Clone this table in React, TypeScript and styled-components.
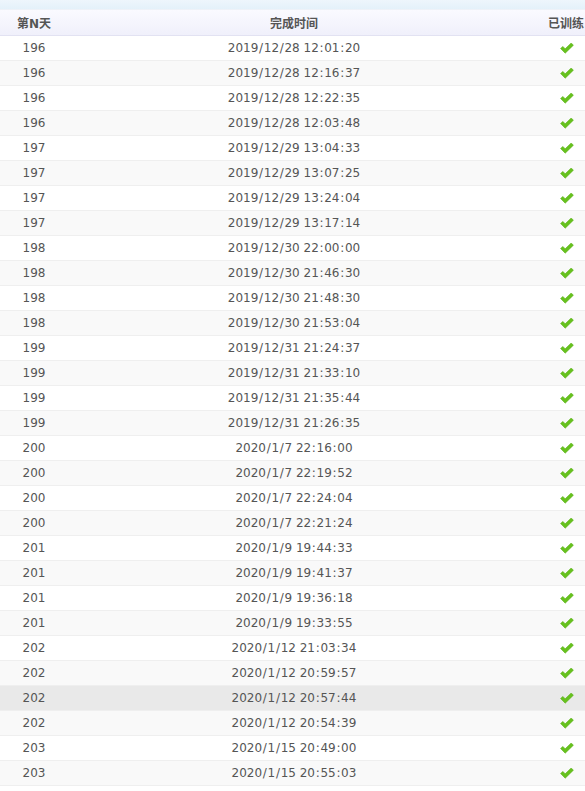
import React, { FC } from "react";
import styled, { createGlobalStyle } from "styled-components";

const GlobalStyle = createGlobalStyle`
  html, body {
    margin: 0;
    padding: 0;
    background: #ffffff;
    overflow: hidden;
  }
`;

const Page = styled.div`
  width: 585px;
  overflow: hidden;
  font-family: "DejaVu Sans", Verdana, "Noto Sans CJK SC", sans-serif;
  font-size: 12px;
  color: #555555;
`;

const TopBand = styled.div`
  height: 10px;
  background: linear-gradient(#eef6fc, #e4f1fa);
  border-bottom: 1px solid #eef2f8;
  box-sizing: border-box;
`;

const Table = styled.table`
  width: 612px;
  border-collapse: collapse;
  table-layout: fixed;
`;

const HeadCell = styled.th<{ width: number }>`
  width: ${(p) => p.width}px;
  height: 25px;
  padding: 0;
  font-weight: bold;
  font-family: "DejaVu Sans", "Noto Sans CJK SC", sans-serif;
  color: #555555;
  text-align: center;
  background: linear-gradient(#fafaff, #f0f0fb);
  border-bottom: 1px solid #e2e2f2;
`;

const Row = styled.tr<{ $alt: boolean; $hover?: boolean }>`
  height: 25px;
  background: ${(p) => (p.$hover ? "#e9e9e9" : p.$alt ? "#f9f9f9" : "#ffffff")};
  border-bottom: 1px solid #efefef;
`;

const Cell = styled.td`
  padding: 0;
  text-align: center;
  vertical-align: middle;
`;

// Verdana-like wider separators
const Sep = styled.span`
  padding: 0 0.7px;
`;

const Stamp: FC<{ text: string }> = ({ text }) => (
  <>
    {text.split(/([/:])/).map((part, i) => (part === "/" || part === ":" ? <Sep key={i}>{part}</Sep> : part))}
  </>
);

const CheckIcon: FC = () => (
  <svg width="14" height="11" viewBox="0 0 14 11" style={{ display: "inline-block", verticalAlign: "middle", marginLeft: 1 }}>
    <path d="M0.6 5.6 L2.8 3.4 L5.2 5.8 L11.2 0 L13.4 2.2 L5.2 10.2 Z" fill="#66c21e" stroke="#5aae18" strokeWidth="0.6" strokeLinejoin="round" />
  </svg>
);

const records: [number, string][] = [
  [196, "2019/12/28 12:01:20"],
  [196, "2019/12/28 12:16:37"],
  [196, "2019/12/28 12:22:35"],
  [196, "2019/12/28 12:03:48"],
  [197, "2019/12/29 13:04:33"],
  [197, "2019/12/29 13:07:25"],
  [197, "2019/12/29 13:24:04"],
  [197, "2019/12/29 13:17:14"],
  [198, "2019/12/30 22:00:00"],
  [198, "2019/12/30 21:46:30"],
  [198, "2019/12/30 21:48:30"],
  [198, "2019/12/30 21:53:04"],
  [199, "2019/12/31 21:24:37"],
  [199, "2019/12/31 21:33:10"],
  [199, "2019/12/31 21:35:44"],
  [199, "2019/12/31 21:26:35"],
  [200, "2020/1/7 22:16:00"],
  [200, "2020/1/7 22:19:52"],
  [200, "2020/1/7 22:24:04"],
  [200, "2020/1/7 22:21:24"],
  [201, "2020/1/9 19:44:33"],
  [201, "2020/1/9 19:41:37"],
  [201, "2020/1/9 19:36:18"],
  [201, "2020/1/9 19:33:55"],
  [202, "2020/1/12 21:03:34"],
  [202, "2020/1/12 20:59:57"],
  [202, "2020/1/12 20:57:44"],
  [202, "2020/1/12 20:54:39"],
  [203, "2020/1/15 20:49:00"],
  [203, "2020/1/15 20:55:03"],
];

const App: FC = () => (
  <Page>
    <GlobalStyle />
    <TopBand />
    <Table>
      <thead>
        <tr>
          <HeadCell width={68}>第N天</HeadCell>
          <HeadCell width={452}>完成时间</HeadCell>
          <HeadCell width={92}>已训练</HeadCell>
        </tr>
      </thead>
      <tbody>
        {records.map(([day, time], i) => (
          <Row key={i} $alt={i % 2 === 1} $hover={i === 26}>
            <Cell>{day}</Cell>
            <Cell>
              <Stamp text={time} />
            </Cell>
            <Cell>
              <CheckIcon />
            </Cell>
          </Row>
        ))}
      </tbody>
    </Table>
  </Page>
);

export default App;
